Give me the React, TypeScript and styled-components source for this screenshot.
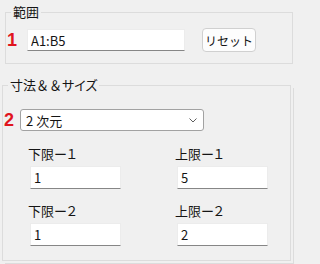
import React from "react";
import styled, { createGlobalStyle } from "styled-components";

const GlobalStyle = createGlobalStyle`
  html, body {
    margin: 0;
    padding: 0;
    background: #f0f0f0;
  }
  body {
    font-family: "Noto Sans CJK JP", "Noto Sans", sans-serif;
    font-size: 13px;
    color: #141414;
    font-feature-settings: "palt";
  }
  * {
    box-sizing: border-box;
  }
`;

const Window = styled.div`
  width: 298px;
  height: 264px;
  padding-top: 4px;
  overflow: hidden;
`;

const Group = styled.fieldset<{ $left: number; $width: number; $shadow?: boolean }>`
  margin: 0 0 0 ${(p) => p.$left}px;
  width: ${(p) => p.$width}px;
  padding: 0;
  border: 1px solid #dcdcdc;
  border-radius: 0;
  box-shadow: ${(p) =>
    p.$shadow ? "2px 2px 0 0 #f0f0f0, 3px 3px 0 0 #dcdcdc" : "none"};

  & + & {
    margin-top: 13px;
  }
`;

const Legend = styled.legend`
  margin-left: 5px;
  padding: 0 2px;
  line-height: 16px;
  height: 16px;
`;

// full-width glyphs that keep their em box
const Wide = styled.span`
  font-feature-settings: normal;
`;

const Row = styled.div<{ $pad: string }>`
  display: flex;
  align-items: center;
  padding: ${(p) => p.$pad};
`;

const Badge = styled.span<{ $w: number }>`
  width: ${(p) => p.$w}px;
  flex: none;
  padding-left: 1px;
  font-family: "Liberation Sans", Arial, sans-serif;
  font-weight: bold;
  font-size: 18px;
  line-height: 18px;
  color: #e0141e;
`;

const TextBox = styled.input<{ $w: number; $h: number }>`
  width: ${(p) => p.$w}px;
  height: ${(p) => p.$h}px;
  flex: none;
  margin: 0;
  padding: 0 3px;
  background: #ffffff;
  border: 1px solid #ececec;
  border-bottom-color: #868686;
  border-radius: 0;
  font-family: inherit;
  font-size: 13px;
  color: #141414;
  outline: none;
`;

const ResetButton = styled.button`
  width: 54px;
  height: 24px;
  margin-left: 17px;
  padding: 0;
  background: #fdfdfd;
  border: 1px solid #d0d0d0;
  border-radius: 4px;
  font-family: inherit;
  font-size: 12px;
  color: #141414;
`;

const Combo = styled.div`
  width: 184px;
  height: 22px;
  display: flex;
  align-items: center;
  justify-content: space-between;
  padding: 0 6px 0 5px;
  background: #ffffff;
  border: 1px solid #a2a2a2;
  border-radius: 3px;
`;

const FieldGrid = styled.div`
  display: grid;
  grid-template-columns: 147px 1fr;
  row-gap: 14px;
  margin-top: 15px;
  padding: 0 0 14px 25px;
`;

const Field = styled.div`
  display: flex;
  flex-direction: column;
  align-items: flex-start;
  gap: 4px;
`;

const FieldLabel = styled.span`
  line-height: 16px;
  height: 16px;
`;

const FieldInput = styled(TextBox)`
  margin-left: 2px;
`;

const Chevron = () => (
  <svg width="8" height="5" viewBox="0 0 8 5" style={{ marginTop: 1 }}>
    <path d="M0.5 0.5 L4 4 L7.5 0.5" fill="none" stroke="#5f5f5f" strokeWidth="1" />
  </svg>
);

const fields = [
  { label: "下限ー１", value: "1" },
  { label: "上限ー１", value: "5" },
  { label: "下限ー２", value: "1" },
  { label: "上限ー２", value: "2" },
];

export default function App() {
  return (
    <Window>
      <GlobalStyle />
      <Group $left={5} $width={288}>
        <Legend>範囲</Legend>
        <Row $pad="8px 0 11px 0">
          <Badge $w={21}>1</Badge>
          <TextBox $w={158} $h={22} defaultValue="A1:B5" />
          <ResetButton>リセット</ResetButton>
        </Row>
      </Group>
      <Group $left={2} $width={289} $shadow>
        <Legend>
          寸法<Wide>＆＆</Wide>サイズ
        </Legend>
        <Row $pad="16px 0 0 0">
          <Badge $w={17}>2</Badge>
          <Combo>
            <span>2 次元</span>
            <Chevron />
          </Combo>
        </Row>
        <FieldGrid>
          {fields.map((f) => (
            <Field key={f.label}>
              <FieldLabel>{f.label}</FieldLabel>
              <FieldInput $w={91} $h={23} defaultValue={f.value} />
            </Field>
          ))}
        </FieldGrid>
      </Group>
    </Window>
  );
}
